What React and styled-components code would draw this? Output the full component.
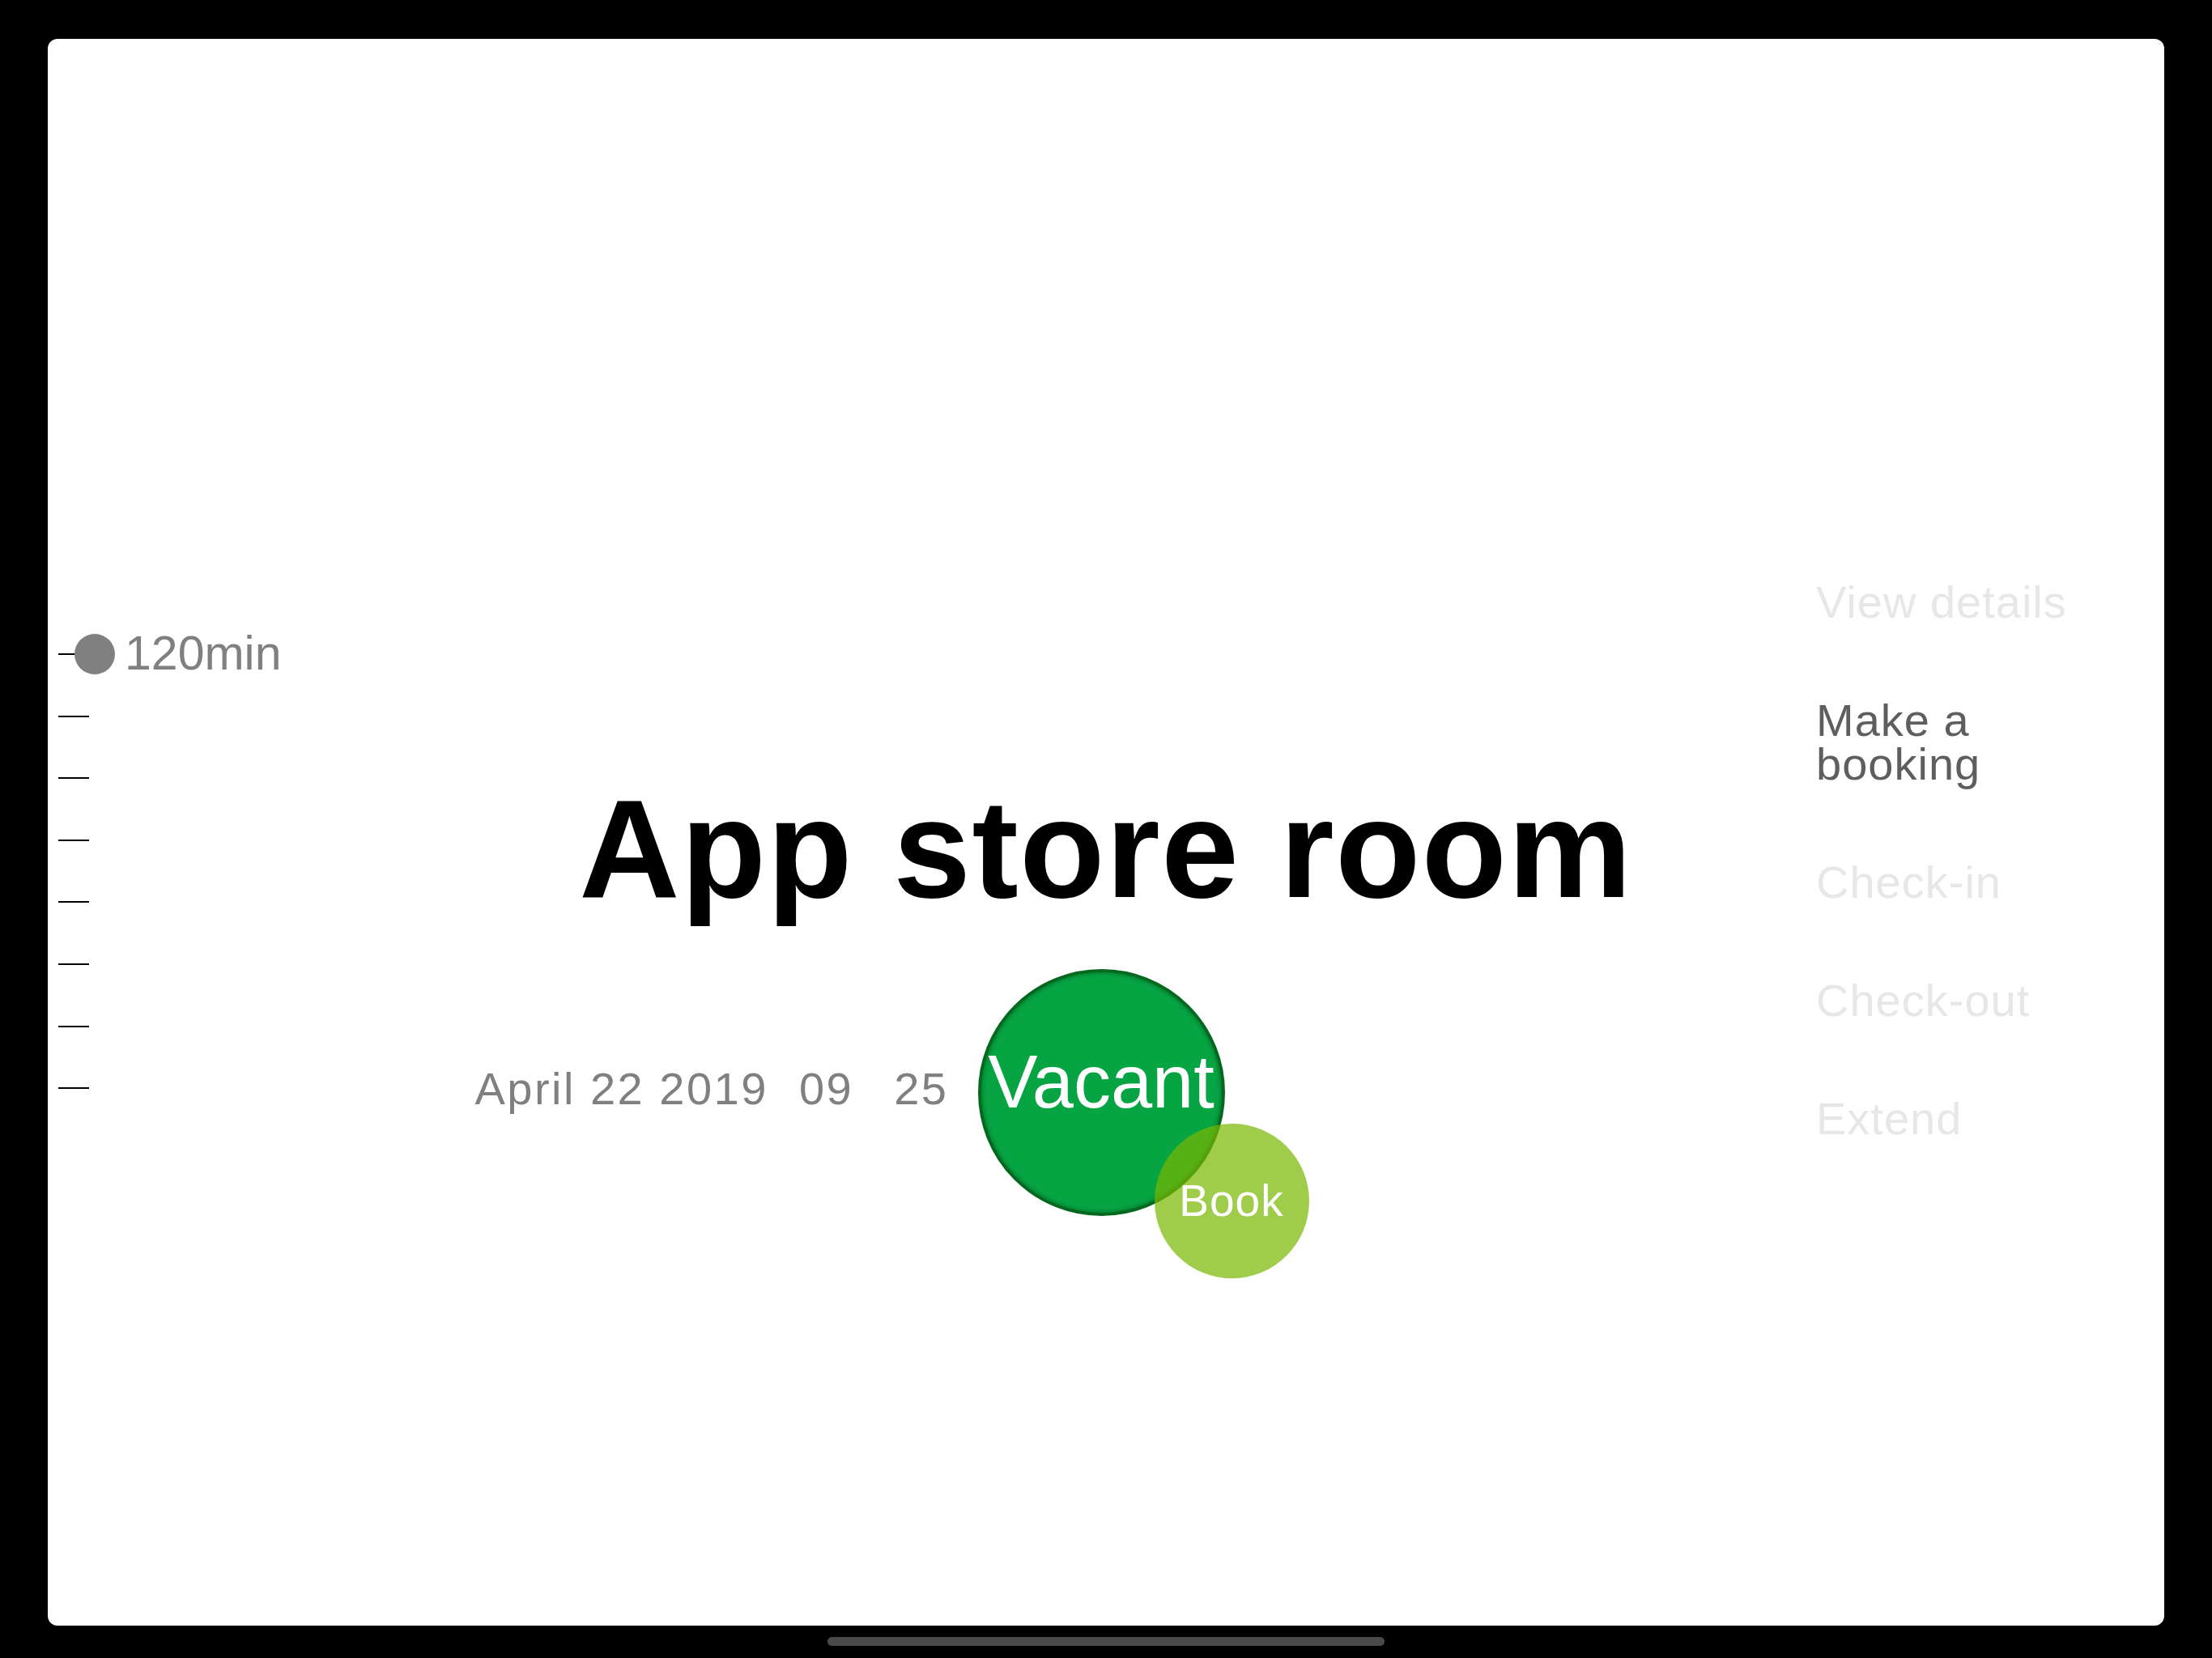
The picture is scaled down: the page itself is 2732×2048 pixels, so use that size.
import React from 'react';
import styled, { createGlobalStyle } from 'styled-components';

const GlobalStyle = createGlobalStyle`
  html, body {
    margin: 0;
    padding: 0;
    background: #000;
  }
  body {
    font-family: "Liberation Sans", Arial, sans-serif;
  }
`;

const Screen = styled.div`
  width: 2732px;
  height: 2048px;
  box-sizing: border-box;
  padding: 48px 59px 0;
  display: flex;
  flex-direction: column;
  background: #000;
  overflow: hidden;
`;

const Panel = styled.div`
  height: 1960px;
  background: #fff;
  border-radius: 12px;
  display: grid;
  grid-template-columns: 430px 1fr 430px;
`;

const HomeBar = styled.div`
  width: 688px;
  height: 11px;
  border-radius: 6px;
  background: #4a4a4a;
  margin: 14px auto 0;
`;

/* left: duration slider */
const SliderCol = styled.div`
  padding: 721.7px 0 0 13px;
  display: flex;
  flex-direction: column;
`;

const TickRow = styled.div`
  position: relative;
  height: 76.6px;
  display: flex;
  align-items: center;
`;

const Tick = styled.div`
  width: 38px;
  height: 2px;
  background: #000;
  flex-shrink: 0;
`;

const Knob = styled.div`
  position: absolute;
  left: 20px;
  top: 50%;
  width: 50px;
  height: 50px;
  margin-top: -25px;
  border-radius: 50%;
  background: #808080;
`;

const DurationLabel = styled.span`
  margin-left: 44px;
  font-size: 59px;
  line-height: 1;
  color: #808080;
`;

/* centre: room + status */
const CenterCol = styled.div`
  padding-top: 914px;
  display: flex;
  flex-direction: column;
`;

const RoomTitle = styled.h1`
  margin: 0;
  text-align: center;
  font-size: 172px;
  line-height: 1;
  font-weight: 700;
  letter-spacing: 1.5px;
  color: #000;
`;

const StatusRow = styled.div`
  margin-top: 63px;
  display: grid;
  grid-template-columns: 1fr auto 1fr;
  align-items: center;
`;

const DateLine = styled.div`
  justify-self: end;
  margin: 0 36px 10px 0;
  display: flex;
  font-size: 56px;
  line-height: 1;
  letter-spacing: 2.5px;
  color: #808080;
  white-space: nowrap;
`;

const TimePart = styled.span`
  margin-left: ${p => p.$offset || 0}px;
`;

const VacantCircle = styled.div`
  position: relative;
  width: 305px;
  height: 305px;
  margin-right: 12px;
  box-sizing: border-box;
  border-radius: 50%;
  background: #07a444;
  border: 4px solid #04691f;
  box-shadow: inset 0 0 4px 2px rgba(0, 90, 30, 0.45);
  display: flex;
  align-items: center;
  justify-content: center;
  padding-bottom: 28px;
  color: #fff;
  font-size: 92px;
  line-height: 1;
`;

const BookBubble = styled.div`
  position: absolute;
  left: 214px;
  top: 187px;
  width: 191px;
  height: 191px;
  border-radius: 50%;
  background: rgba(120, 182, 0, 0.7);
  display: flex;
  align-items: center;
  justify-content: center;
  color: #fff;
  font-size: 55px;
  line-height: 1;
  letter-spacing: 1px;
`;

/* right: action menu */
const Menu = styled.nav`
  padding-top: 669px;
  display: flex;
  flex-direction: column;
  gap: 92px;
`;

const MenuItem = styled.div`
  font-size: 56px;
  line-height: 54px;
  letter-spacing: 1px;
  white-space: pre-line;
  color: ${p => (p.$active ? '#5e5e5e' : '#e7e7e7')};
`;

const ticks = [0, 1, 2, 3, 4, 5, 6, 7];

const actions = [
  { label: 'View details' },
  { label: 'Make a\nbooking', active: true },
  { label: 'Check-in' },
  { label: 'Check-out' },
  { label: 'Extend' },
];

export default function App() {
  return (
    <>
      <GlobalStyle />
      <Screen>
        <Panel>
          <SliderCol>
            {ticks.map(i => (
              <TickRow key={i}>
                <Tick />
                {i === 0 && (
                  <>
                    <Knob />
                    <DurationLabel>120min</DurationLabel>
                  </>
                )}
              </TickRow>
            ))}
          </SliderCol>

          <CenterCol>
            <RoomTitle>App store room</RoomTitle>
            <StatusRow>
              <DateLine>
                <span>April 22 2019</span>
                <TimePart $offset={38}>09</TimePart>
                <TimePart $offset={50}>25</TimePart>
              </DateLine>
              <VacantCircle>
                Vacant
                <BookBubble>Book</BookBubble>
              </VacantCircle>
              <div />
            </StatusRow>
          </CenterCol>

          <Menu>
            {actions.map(a => (
              <MenuItem key={a.label} $active={a.active}>
                {a.label}
              </MenuItem>
            ))}
          </Menu>
        </Panel>
        <HomeBar />
      </Screen>
    </>
  );
}
